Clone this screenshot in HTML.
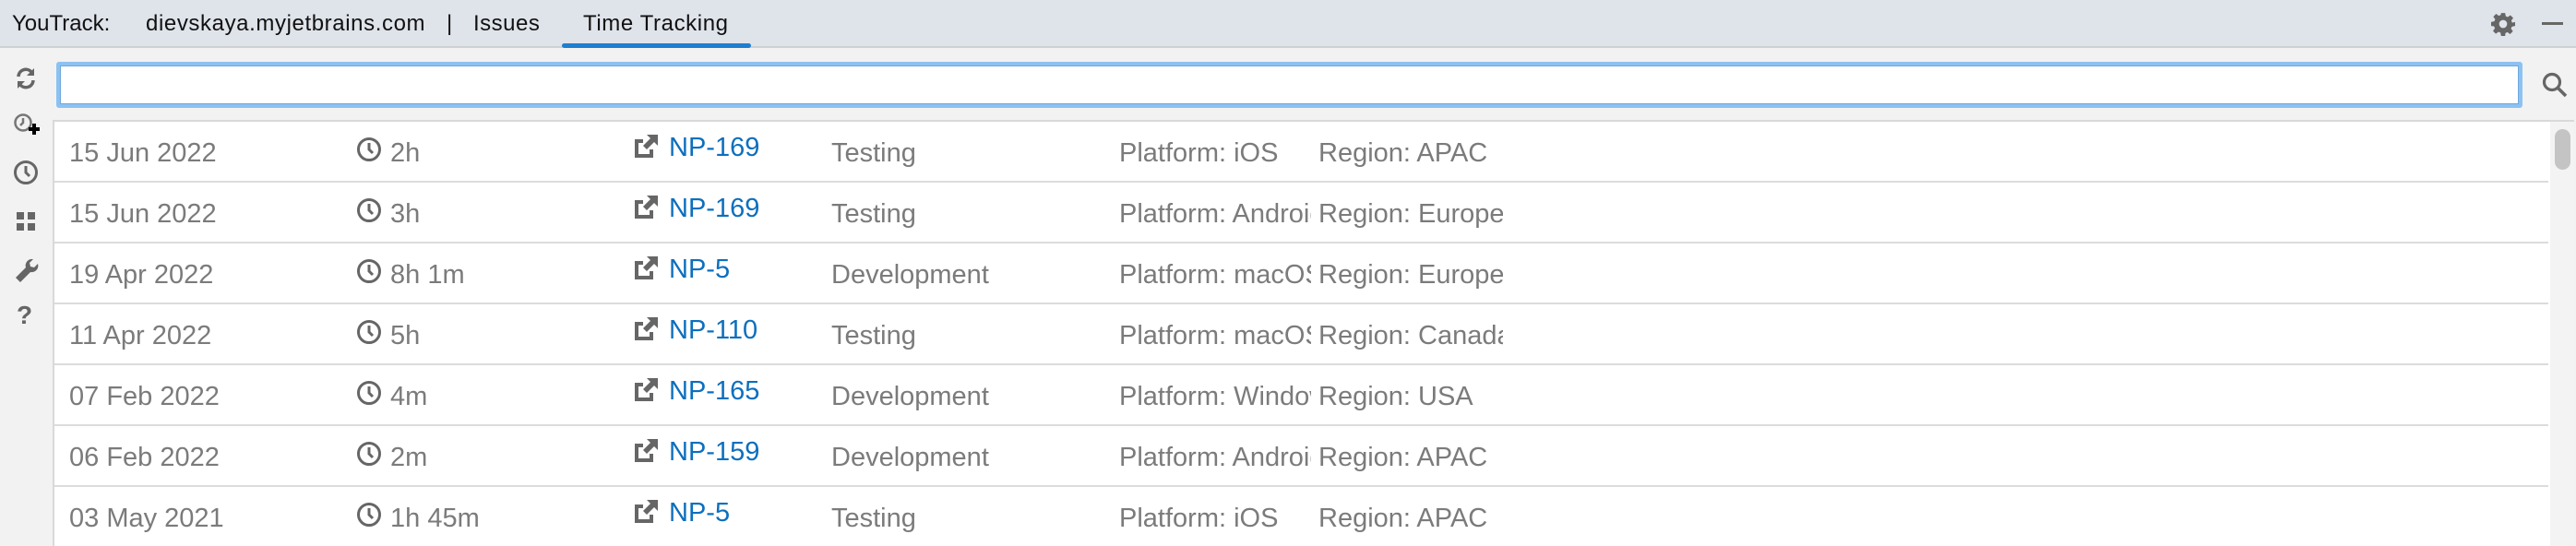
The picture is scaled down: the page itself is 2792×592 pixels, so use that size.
<!DOCTYPE html>
<html><head><meta charset="utf-8"><style>
*{margin:0;padding:0;box-sizing:border-box}
body{width:2792px;height:592px;overflow:hidden;background:#f2f2f2;font-family:"Liberation Sans",sans-serif;position:relative}
.hdr{position:absolute;left:0;top:0;width:2792px;height:52px;background:#dfe3ea;border-bottom:2px solid #cfd1d4}
.ht{position:absolute;top:12px;font-size:24px;color:#111;line-height:28px;white-space:nowrap}
.ul{position:absolute;left:609px;top:47px;width:205px;height:5px;background:#1e7ed0;border-radius:3px}
.search{position:absolute;left:61px;top:67px;width:2673px;height:50px;border:4px solid #8cc2f2;border-radius:3px;background:#fff;box-shadow:inset 0 0 0 1px #6fa8dc}
.list{position:absolute;left:57px;top:130px;width:2733px;height:462px;background:#fff;border-left:2px solid #d9d9d9;border-top:2px solid #d9d9d9;overflow:hidden}
.row{position:absolute;left:0;width:2705px;height:66px;border-bottom:2px solid #dcdcdc}
.t{position:absolute;top:17px;font-size:29px;color:#7b7b7b;white-space:nowrap;overflow:hidden;line-height:34px}
.l{color:#0c6fbe;top:11px}
.sb{position:absolute;left:2705px;top:0;width:28px;height:462px;background:#f3f3f3;border-right:2px solid #d6d6d6}
.th{position:absolute;left:5px;top:8px;width:17px;height:44px;background:#c4c4c4;border-radius:9px}
svg{position:absolute}
</style></head><body>
<div class="hdr">
<div class="ht" style="left:13px">YouTrack:</div>
<div class="ht" style="left:158px;letter-spacing:0.6px">dievskaya.myjetbrains.com</div>
<div class="ht" style="left:484px">|</div>
<div class="ht" style="left:513px;letter-spacing:0.5px">Issues</div>
<div class="ht" style="left:632px;letter-spacing:0.6px">Time Tracking</div>
<div class="ul"></div>
<svg style="left:2700px;top:13px" width="26" height="26" viewBox="0 0 24 24"><path fill="#666" d="M10 1h4l.6 3.2 2 .9 2.7-1.9 2.8 2.8-1.9 2.7.9 2L24 10v4l-3.2.6-.9 2 1.9 2.7-2.8 2.8-2.7-1.9-2 .9L14 24h-4l-.6-3.2-2-.9-2.7 1.9-2.8-2.8 1.9-2.7-.9-2L0 14v-4l3.2-.6.9-2L2.2 4.7 5 1.9l2.7 1.9 2-.9zM12 8a4 4 0 100 8 4 4 0 000-8z"/></svg>
<div style="position:absolute;left:2755px;top:24px;width:23px;height:3px;background:#666"></div>
</div>
<svg style="left:16px;top:72px" width="24" height="26" viewBox="0 0 24 26"><path d="M4 11a8 8 0 0 1 14-5" stroke="#666" stroke-width="3.5" fill="none"/><path d="M21 2v8h-8z" fill="#666"/><path d="M20 15a8 8 0 0 1-14 5" stroke="#666" stroke-width="3.5" fill="none"/><path d="M3 24v-8h8z" fill="#666"/></svg>
<svg style="left:14px;top:122px" width="30" height="28" viewBox="0 0 30 28"><circle cx="11" cy="11" r="8.5" stroke="#777" stroke-width="2.5" fill="none"/><path d="M11 6v5l-3 3" stroke="#777" stroke-width="2.5" fill="none"/><path d="M17 18h12M23 12v12" stroke="#000" stroke-width="4"/></svg>
<svg style="left:14px;top:173px" width="28" height="28" viewBox="0 0 28 28"><circle cx="14" cy="14" r="11.5" stroke="#666" stroke-width="3" fill="none"/><path d="M14 7v7l4 4" stroke="#666" stroke-width="3" fill="none"/></svg>
<svg style="left:18px;top:230px" width="20" height="20" viewBox="0 0 20 20"><rect x="0" y="0" width="8" height="8" fill="#666"/><rect x="12" y="0" width="8" height="8" fill="#666"/><rect x="0" y="12" width="8" height="8" fill="#666"/><rect x="12" y="12" width="8" height="8" fill="#666"/></svg>
<svg style="left:15px;top:280px" width="28" height="28" viewBox="0 0 28 28"><path d="M26 6l-4 4-4-1-1-4 4-4a7 7 0 0 0-8 9L2 21l5 5 11-11a7 7 0 0 0 8-9z" fill="#666"/></svg>
<div style="position:absolute;left:18px;top:326px;font-size:28px;color:#666;font-weight:bold">?</div>
<div class="search"></div>
<svg style="left:2755px;top:78px" width="28" height="28" viewBox="0 0 28 28"><circle cx="11" cy="11" r="8.5" stroke="#666" stroke-width="3.2" fill="none"/><path d="M17 17l9 9" stroke="#666" stroke-width="3.5"/></svg>
<div class="list">
<div class="sb"><div class="th"></div></div>
</div>
<div style="position:absolute;left:59px;top:132px;width:2703px;height:460px;overflow:hidden">
<div class="row" style="top:0"><div class="t" style="left:16px">15 Jun 2022</div><svg style="left:327px;top:16px" width="28" height="28" viewBox="0 0 28 28"><circle cx="14" cy="14" r="11.5" stroke="#666" stroke-width="3" fill="none"/><path d="M14 7v7l4 4" stroke="#666" stroke-width="3" fill="none"/></svg><div class="t" style="left:364px">2h</div><svg style="left:629px;top:14px" width="25" height="25" viewBox="0 0 25 25"><path d="M0 5h9v4H4v12h12v-5h4v9H0z" fill="#666"/><path d="M13 0h12v12l-4-4-8 8-4-4 8-8z" fill="#666"/></svg><div class="t l" style="left:666px">NP-169</div><div class="t" style="left:842px">Testing</div><div class="t" style="left:1154px;width:208px">Platform: iOS</div><div class="t" style="left:1370px;width:200px">Region: APAC</div></div>
<div class="row" style="top:66px"><div class="t" style="left:16px">15 Jun 2022</div><svg style="left:327px;top:16px" width="28" height="28" viewBox="0 0 28 28"><circle cx="14" cy="14" r="11.5" stroke="#666" stroke-width="3" fill="none"/><path d="M14 7v7l4 4" stroke="#666" stroke-width="3" fill="none"/></svg><div class="t" style="left:364px">3h</div><svg style="left:629px;top:14px" width="25" height="25" viewBox="0 0 25 25"><path d="M0 5h9v4H4v12h12v-5h4v9H0z" fill="#666"/><path d="M13 0h12v12l-4-4-8 8-4-4 8-8z" fill="#666"/></svg><div class="t l" style="left:666px">NP-169</div><div class="t" style="left:842px">Testing</div><div class="t" style="left:1154px;width:208px">Platform: Android</div><div class="t" style="left:1370px;width:200px">Region: Europe</div></div>
<div class="row" style="top:132px"><div class="t" style="left:16px">19 Apr 2022</div><svg style="left:327px;top:16px" width="28" height="28" viewBox="0 0 28 28"><circle cx="14" cy="14" r="11.5" stroke="#666" stroke-width="3" fill="none"/><path d="M14 7v7l4 4" stroke="#666" stroke-width="3" fill="none"/></svg><div class="t" style="left:364px">8h 1m</div><svg style="left:629px;top:14px" width="25" height="25" viewBox="0 0 25 25"><path d="M0 5h9v4H4v12h12v-5h4v9H0z" fill="#666"/><path d="M13 0h12v12l-4-4-8 8-4-4 8-8z" fill="#666"/></svg><div class="t l" style="left:666px">NP-5</div><div class="t" style="left:842px">Development</div><div class="t" style="left:1154px;width:208px">Platform: macOS</div><div class="t" style="left:1370px;width:200px">Region: Europe</div></div>
<div class="row" style="top:198px"><div class="t" style="left:16px">11 Apr 2022</div><svg style="left:327px;top:16px" width="28" height="28" viewBox="0 0 28 28"><circle cx="14" cy="14" r="11.5" stroke="#666" stroke-width="3" fill="none"/><path d="M14 7v7l4 4" stroke="#666" stroke-width="3" fill="none"/></svg><div class="t" style="left:364px">5h</div><svg style="left:629px;top:14px" width="25" height="25" viewBox="0 0 25 25"><path d="M0 5h9v4H4v12h12v-5h4v9H0z" fill="#666"/><path d="M13 0h12v12l-4-4-8 8-4-4 8-8z" fill="#666"/></svg><div class="t l" style="left:666px">NP-110</div><div class="t" style="left:842px">Testing</div><div class="t" style="left:1154px;width:208px">Platform: macOS</div><div class="t" style="left:1370px;width:200px">Region: Canada</div></div>
<div class="row" style="top:264px"><div class="t" style="left:16px">07 Feb 2022</div><svg style="left:327px;top:16px" width="28" height="28" viewBox="0 0 28 28"><circle cx="14" cy="14" r="11.5" stroke="#666" stroke-width="3" fill="none"/><path d="M14 7v7l4 4" stroke="#666" stroke-width="3" fill="none"/></svg><div class="t" style="left:364px">4m</div><svg style="left:629px;top:14px" width="25" height="25" viewBox="0 0 25 25"><path d="M0 5h9v4H4v12h12v-5h4v9H0z" fill="#666"/><path d="M13 0h12v12l-4-4-8 8-4-4 8-8z" fill="#666"/></svg><div class="t l" style="left:666px">NP-165</div><div class="t" style="left:842px">Development</div><div class="t" style="left:1154px;width:208px">Platform: Windows</div><div class="t" style="left:1370px;width:200px">Region: USA</div></div>
<div class="row" style="top:330px"><div class="t" style="left:16px">06 Feb 2022</div><svg style="left:327px;top:16px" width="28" height="28" viewBox="0 0 28 28"><circle cx="14" cy="14" r="11.5" stroke="#666" stroke-width="3" fill="none"/><path d="M14 7v7l4 4" stroke="#666" stroke-width="3" fill="none"/></svg><div class="t" style="left:364px">2m</div><svg style="left:629px;top:14px" width="25" height="25" viewBox="0 0 25 25"><path d="M0 5h9v4H4v12h12v-5h4v9H0z" fill="#666"/><path d="M13 0h12v12l-4-4-8 8-4-4 8-8z" fill="#666"/></svg><div class="t l" style="left:666px">NP-159</div><div class="t" style="left:842px">Development</div><div class="t" style="left:1154px;width:208px">Platform: Android</div><div class="t" style="left:1370px;width:200px">Region: APAC</div></div>
<div class="row" style="top:396px;border-bottom:none"><div class="t" style="left:16px">03 May 2021</div><svg style="left:327px;top:16px" width="28" height="28" viewBox="0 0 28 28"><circle cx="14" cy="14" r="11.5" stroke="#666" stroke-width="3" fill="none"/><path d="M14 7v7l4 4" stroke="#666" stroke-width="3" fill="none"/></svg><div class="t" style="left:364px">1h 45m</div><svg style="left:629px;top:14px" width="25" height="25" viewBox="0 0 25 25"><path d="M0 5h9v4H4v12h12v-5h4v9H0z" fill="#666"/><path d="M13 0h12v12l-4-4-8 8-4-4 8-8z" fill="#666"/></svg><div class="t l" style="left:666px">NP-5</div><div class="t" style="left:842px">Testing</div><div class="t" style="left:1154px;width:208px">Platform: iOS</div><div class="t" style="left:1370px;width:200px">Region: APAC</div></div>
</div>
</body></html>
